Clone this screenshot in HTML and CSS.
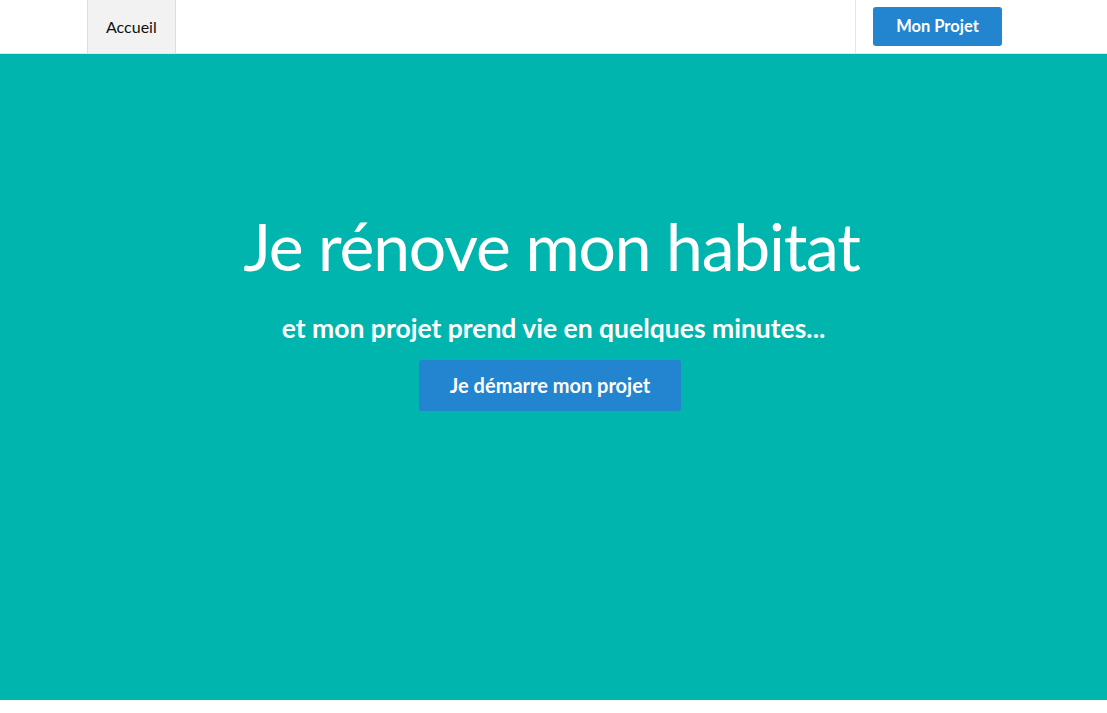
FILE: index.html
```html
<!DOCTYPE html>
<html lang="fr">
<head>
<meta charset="utf-8">
<title>Je rénove mon habitat</title>
<link rel="stylesheet" href="styles.css">
</head>
<body>
<header class="topbar">
  <div class="container nav">
    <ul class="nav-left">
      <li class="nav-item active"><a href="#">Accueil</a></li>
    </ul>
    <div class="nav-right">
      <a class="btn btn-small" href="#">Mon Projet</a>
    </div>
  </div>
</header>
<section class="hero">
  <h1 class="hero-title">Je rénove mon habitat</h1>
  <p class="hero-sub">et mon projet prend vie en quelques minutes...</p>
  <a class="btn btn-large" href="#">Je démarre mon projet</a>
</section>
</body>
</html>
```
FILE: styles.css
```css
* { box-sizing: border-box; }
html, body { margin: 0; padding: 0; }
body {
  font-family: Lato, "Open Sans", Arial, sans-serif;
  background: #fff;
  color: #222;
}
.topbar {
  height: 54px;
  background: #fff;
  border-bottom: 1px solid #e4e4e4;
}
.container {
  width: 933px;
  margin: 0 auto;
}
.nav {
  display: flex;
  justify-content: space-between;
  height: 53px;
}
.nav-left {
  list-style: none;
  margin: 0;
  padding: 0;
  display: flex;
}
.nav-item a {
  display: flex;
  align-items: center;
  height: 53px;
  padding: 0 18px 1px;
  font-size: 16px;
  color: #111;
  text-decoration: none;
  background: #f2f2f2;
  border-left: 1px solid #ddd;
  border-right: 1px solid #ddd;
}
.nav-right {
  border-left: 1px solid #e6e6e6;
  padding: 7px 18px 0 17px;
}
.btn {
  display: inline-flex;
  align-items: center;
  justify-content: center;
  background: #2384d0;
  color: #fff;
  font-weight: 700;
  text-decoration: none;
  border-radius: 3px;
}
.btn-small {
  width: 129px;
  height: 39px;
  padding-bottom: 1px;
  font-size: 16.5px;
}
.hero {
  background: #00b5ae;
  height: 646px;
  display: flex;
  flex-direction: column;
  align-items: center;
  padding-top: 156px;
  color: #fff;
}
.hero-title {
  margin: 0 0 0 -4px;
  font-size: 66px;
  font-weight: 400;
  line-height: 72px;
  letter-spacing: -1.2px;
}
.hero-sub {
  margin: 29px 0 0;
  font-size: 26.5px;
  font-weight: 700;
  line-height: 34px;
}
.btn-large {
  margin: 15px 7px 0 0;
  width: 262px;
  height: 51px;
  padding-bottom: 1px;
  font-size: 20px;
}
```
